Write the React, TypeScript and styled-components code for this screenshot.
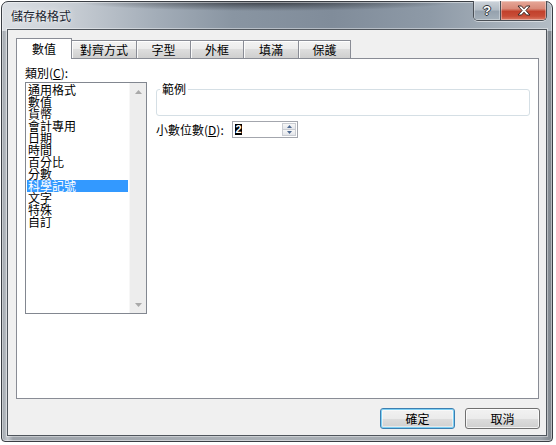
import React from 'react';
import styled, { createGlobalStyle } from 'styled-components';

const FONT = `"Noto Sans CJK TC", "Liberation Sans", sans-serif`;

const GlobalStyle = createGlobalStyle`
  html, body { margin: 0; padding: 0; background: #ffffff; }
  body { font-family: ${FONT}; font-size: 12px; color: #000; }
  * { box-sizing: border-box; }
`;

const Window = styled.div`
  margin: 1px 0 0 1px;
  width: 552px;
  height: 441px;
  border: 1px solid #3a3e44;
  border-radius: 7px 7px 4px 4px;
  padding: 0 5px 5px 5px;
  display: flex;
  flex-direction: column;
  background:
    radial-gradient(ellipse 190px 9px at 48% 0, rgba(35, 38, 44, 0.75), rgba(35, 38, 44, 0) 100%) no-repeat,
    linear-gradient(to right, #dadee3 0%, #cdd2d8 10%, #a3adb8 28%, #8995a2 42%, #808c9a 60%, #8e9aa7 78%, #a7b1bb 92%, #b3bcc5 100%) no-repeat 0 0 / 100% 29px,
    linear-gradient(to right, #9aa1a8 0%, #c6cacf 1%, #9da3aa 2%, #aab0b6 50%, #9aa1a8 98%, #7e858c 100%);
  box-shadow: inset 0 0 0 1px rgba(255, 255, 255, 0.45);
`;

const TitleBar = styled.div`
  height: 27px;
  display: flex;
  align-items: flex-start;
  padding-left: 4px;
`;

const Title = styled.div`
  margin-top: 8px;
  line-height: 12px;
  font-size: 12px;
  color: #1b2430;
  text-shadow: 0 0 6px rgba(255, 255, 255, 0.9), 0 0 2px rgba(255, 255, 255, 0.8);
  flex: 1;
`;

const CaptionGroup = styled.div`
  display: flex;
  margin-top: -1px;
  border: 1px solid #4a4f56;
  border-top: none;
  border-radius: 0 0 5px 5px;
  overflow: hidden;
  box-shadow: 0 1px 0 rgba(255, 255, 255, 0.5);
`;

const CaptionButton = styled.div<{ $w: number; $close?: boolean }>`
  width: ${(p) => p.$w}px;
  height: 19px;
  display: flex;
  align-items: center;
  justify-content: center;
  box-shadow: inset 0 0 0 1px rgba(255, 255, 255, 0.35);
  background: ${(p) =>
    p.$close
      ? 'linear-gradient(to bottom, #e6a899 0%, #d98a79 40%, #c2412c 55%, #c84d37 80%, #dc7b66 100%)'
      : 'linear-gradient(to bottom, #cdd4db 0%, #b3bcc5 45%, #96a2ae 55%, #a5b0ba 100%)'};
  & + & {
    border-left: 1px solid #4a4f56;
  }
`;

const HelpGlyph = styled.span`
  font-family: "Liberation Sans", sans-serif;
  font-weight: bold;
  font-size: 13px;
  line-height: 13px;
  color: #ffffff;
  text-shadow: -1px 0 #30353b, 1px 0 #30353b, 0 -1px #30353b, 0 1px #30353b;
`;

const Client = styled.div`
  flex: 1;
  border: 1px solid #4f555c;
  background: #f0f0f0;
  padding: 8px 7px 6px 8px;
  display: flex;
  flex-direction: column;
  box-shadow: 0 0 0 1px rgba(255, 255, 255, 0.4);
`;

const TabStrip = styled.div`
  height: 20px;
  display: flex;
  align-items: flex-end;
`;

const Tab = styled.div<{ $w: number; $active?: boolean }>`
  position: relative;
  z-index: ${(p) => (p.$active ? 2 : 1)};
  width: ${(p) => p.$w}px;
  height: ${(p) => (p.$active ? 21 : 18)}px;
  margin-bottom: ${(p) => (p.$active ? -1 : 0)}px;
  border: 1px solid #898c95;
  border-bottom: none;
  display: flex;
  align-items: center;
  justify-content: center;
  line-height: 12px;
  font-size: 12px;
  background: ${(p) =>
    p.$active ? '#ffffff' : 'linear-gradient(to bottom, #f3f3f3 0%, #ebebeb 50%, #dddddd 50%, #cfcfcf 100%)'};
  box-shadow: ${(p) => (p.$active ? 'none' : 'inset 0 1px 0 #ffffff, inset 1px 0 0 #fafafa')};
  & + & {
    margin-left: -1px;
  }
`;

const Panel = styled.div`
  height: 341px;
  border: 1px solid #898c95;
  background: #ffffff;
  padding: 8px;
  display: flex;
  gap: 9px;
`;

const LeftColumn = styled.div`
  width: 122px;
  display: flex;
  flex-direction: column;
`;

const FieldLabel = styled.div<{ $w?: number }>`
  line-height: 12px;
  font-size: 12px;
  white-space: nowrap;
  ${(p) => (p.$w ? `width: ${p.$w}px; flex: none;` : '')}
`;

const Key = styled.span`
  text-decoration: underline;
`;

const ListBox = styled.div`
  margin-top: 3px;
  width: 122px;
  height: 232px;
  border: 1px solid #828790;
  display: flex;
`;

const Items = styled.div`
  flex: 1;
  padding: 1px;
`;

const Item = styled.div<{ $active?: boolean }>`
  height: 12px;
  line-height: 12px;
  font-size: 12px;
  padding-left: 1px;
  white-space: nowrap;
  background: ${(p) => (p.$active ? '#3399ff' : 'transparent')};
  color: ${(p) => (p.$active ? '#ffffff' : '#000000')};
`;

const ScrollBar = styled.div`
  width: 17px;
  background: #ededed;
  border-left: 1px solid #f7f7f7;
  display: flex;
  flex-direction: column;
  justify-content: space-between;
`;

const ScrollArrow = styled.div`
  height: 17px;
  display: flex;
  align-items: center;
  justify-content: center;
`;

const RightColumn = styled.div`
  flex: 1;
  padding-top: 16px;
  display: flex;
  flex-direction: column;
`;

const GroupBox = styled.div`
  position: relative;
  margin-top: 6px;
  height: 27px;
  border: 1px solid #d5dfe5;
  border-radius: 3px;
`;

const GroupLabel = styled.div`
  position: absolute;
  top: -7px;
  left: 3px;
  padding: 0 2px;
  background: #ffffff;
  line-height: 12px;
  font-size: 12px;
`;

const DecimalRow = styled.div`
  margin-top: 5px;
  height: 17px;
  display: flex;
  align-items: center;
`;

const SpinBox = styled.div`
  width: 66px;
  height: 17px;
  border: 1px solid #a3a6ad;
  background: #ffffff;
  display: flex;
`;

const SpinValue = styled.div`
  flex: 1;
  display: flex;
  align-items: center;
  padding-left: 2px;
`;

const SelectedText = styled.span`
  display: inline-block;
  width: 7px;
  height: 11px;
  background: #000000;
  color: #ffffff;
  font-family: "Liberation Sans", sans-serif;
  font-weight: bold;
  font-size: 11px;
  line-height: 11px;
  text-align: center;
`;

const SpinButtons = styled.div`
  width: 15px;
  display: flex;
  flex-direction: column;
  padding: 1px 1px 1px 0;
`;

const SpinHalf = styled.div`
  flex: 1;
  display: flex;
  align-items: center;
  justify-content: center;
  border: 1px solid #c9ccd2;
  background: linear-gradient(to bottom, #f7f7f7, #e4e6ea);
  & + & {
    border-top: none;
  }
`;

const Footer = styled.div`
  margin-top: 9px;
  margin-right: -1px;
  display: flex;
  justify-content: flex-end;
  gap: 10px;
`;

const PushButton = styled.div<{ $default?: boolean }>`
  width: 75px;
  height: 21px;
  border: 1px solid ${(p) => (p.$default ? '#3c7fb1' : '#707070')};
  border-radius: 3px;
  background: linear-gradient(to bottom, #f2f2f2 0%, #ebebeb 50%, #dddddd 50%, #cfcfcf 100%);
  box-shadow: ${(p) =>
    p.$default ? 'inset 0 0 0 1px #7ed0f4, inset 0 0 0 2px rgba(255,255,255,0.5)' : 'inset 0 0 0 1px rgba(255,255,255,0.75)'};
  display: flex;
  align-items: center;
  justify-content: center;
  line-height: 12px;
  font-size: 12px;
  color: #000;
`;

const tabs = [
  { label: '數值', w: 56, active: true },
  { label: '對齊方式', w: 66 },
  { label: '字型', w: 55 },
  { label: '外框', w: 54 },
  { label: '填滿', w: 56 },
  { label: '保護', w: 53 },
];

const categories = [
  '通用格式',
  '數值',
  '貨幣',
  '會計專用',
  '日期',
  '時間',
  '百分比',
  '分數',
  '科學記號',
  '文字',
  '特殊',
  '自訂',
];

const Triangle = ({ up, color, w, h }: { up?: boolean; color: string; w: number; h: number }) => (
  <svg width={w} height={h} viewBox={`0 0 ${w} ${h}`}>
    {up ? (
      <polygon points={`0,${h} ${w},${h} ${w / 2},0`} fill={color} />
    ) : (
      <polygon points={`0,0 ${w},0 ${w / 2},${h}`} fill={color} />
    )}
  </svg>
);

const CloseIcon = () => (
  <svg width="14" height="11" viewBox="0 0 14 11">
    <path
      d="M1 1 H4.5 L7 3.8 L9.5 1 H13 L8.9 5.5 L13 10 H9.5 L7 7.2 L4.5 10 H1 L5.1 5.5 Z"
      fill="#ffffff"
      stroke="#3b2a28"
      strokeWidth="1"
      strokeLinejoin="round"
    />
  </svg>
);

export default function App() {
  return (
    <>
      <GlobalStyle />
      <Window>
        <TitleBar>
          <Title>儲存格格式</Title>
          <CaptionGroup>
            <CaptionButton $w={26}>
              <HelpGlyph>?</HelpGlyph>
            </CaptionButton>
            <CaptionButton $w={46} $close>
              <CloseIcon />
            </CaptionButton>
          </CaptionGroup>
        </TitleBar>
        <Client>
          <TabStrip>
            {tabs.map((t) => (
              <Tab key={t.label} $w={t.w} $active={t.active}>
                {t.label}
              </Tab>
            ))}
          </TabStrip>
          <Panel>
            <LeftColumn>
              <FieldLabel>
                類別(<Key>C</Key>):
              </FieldLabel>
              <ListBox>
                <Items>
                  {categories.map((c) => (
                    <Item key={c} $active={c === '科學記號'}>
                      {c}
                    </Item>
                  ))}
                </Items>
                <ScrollBar>
                  <ScrollArrow>
                    <Triangle up color="#a9a9a9" w={7} h={4} />
                  </ScrollArrow>
                  <ScrollArrow>
                    <Triangle color="#a9a9a9" w={7} h={4} />
                  </ScrollArrow>
                </ScrollBar>
              </ListBox>
            </LeftColumn>
            <RightColumn>
              <GroupBox>
                <GroupLabel>範例</GroupLabel>
              </GroupBox>
              <DecimalRow>
                <FieldLabel $w={76}>
                  小數位數(<Key>D</Key>):
                </FieldLabel>
                <SpinBox>
                  <SpinValue>
                    <SelectedText>2</SelectedText>
                  </SpinValue>
                  <SpinButtons>
                    <SpinHalf>
                      <Triangle up color="#4f6a92" w={5} h={3} />
                    </SpinHalf>
                    <SpinHalf>
                      <Triangle color="#4f6a92" w={5} h={3} />
                    </SpinHalf>
                  </SpinButtons>
                </SpinBox>
              </DecimalRow>
            </RightColumn>
          </Panel>
          <Footer>
            <PushButton $default>確定</PushButton>
            <PushButton>取消</PushButton>
          </Footer>
        </Client>
      </Window>
    </>
  );
}
